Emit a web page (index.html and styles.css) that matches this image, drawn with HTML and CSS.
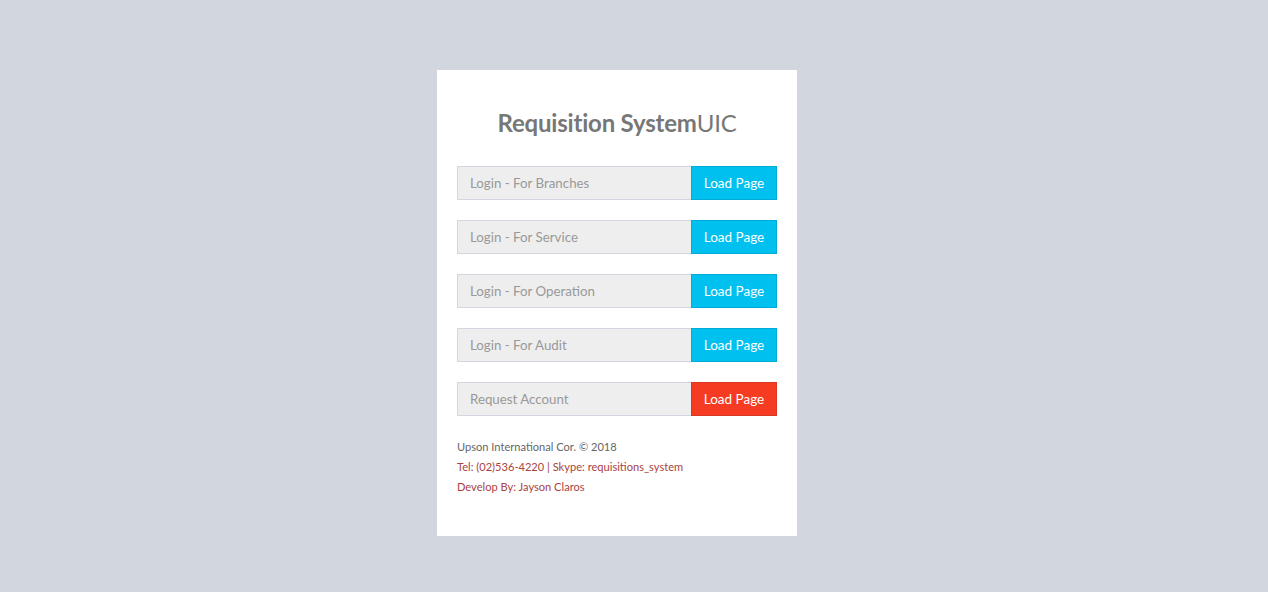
FILE: index.html
```html
<!DOCTYPE html>
<html>
<head>
<meta charset="utf-8">
<link rel="stylesheet" href="styles.css">
</head>
<body>
<div class="login-box">
  <h1 class="logo"><b>Requisition System</b>UIC</h1>
  <div class="row">
    <div class="field">Login - For Branches</div>
    <a class="btn btn-info">Load Page</a>
  </div>
  <div class="row">
    <div class="field">Login - For Service</div>
    <a class="btn btn-info">Load Page</a>
  </div>
  <div class="row">
    <div class="field">Login - For Operation</div>
    <a class="btn btn-info">Load Page</a>
  </div>
  <div class="row">
    <div class="field">Login - For Audit</div>
    <a class="btn btn-info">Load Page</a>
  </div>
  <div class="row">
    <div class="field">Request Account</div>
    <a class="btn btn-danger">Load Page</a>
  </div>
  <div class="footer">
    <div class="line muted">Upson International Cor. © 2018</div>
    <div class="line red">Tel: (02)536-4220 | Skype: requisitions_system</div>
    <div class="line red">Develop By: Jayson Claros</div>
  </div>
</div>
</body>
</html>
```
FILE: styles.css
```css
html, body {
  margin: 0;
  padding: 0;
}
body {
  background: #d2d6de;
  font-family: "Lato", "Liberation Sans", sans-serif;
  height: 592px;
  overflow: hidden;
  padding-right: 34px;
}
.login-box {
  width: 320px;
  margin: 70px auto 0;
  background: #fff;
  padding: 20px 20px 39px;
}
.logo {
  margin: 18px 0 28px;
  text-align: center;
  font-size: 24px;
  font-weight: 400;
  color: #777;
  line-height: 30px;
  letter-spacing: -0.2px;
}
.logo b {
  font-weight: 700;
}
.row {
  display: flex;
  height: 34px;
  margin-bottom: 20px;
}
.field {
  flex: 1;
  box-sizing: border-box;
  background: #eee;
  border: 1px solid #d2d6de;
  border-right: none;
  padding: 0 12px;
  display: flex;
  align-items: center;
  font-size: 13.3px;
  color: #999;
}
.btn {
  width: 86px;
  box-sizing: border-box;
  display: flex;
  align-items: center;
  justify-content: center;
  font-size: 13.5px;
  color: #fff;
  border: 1px solid;
}
.btn-info {
  background: #00c0ef;
  border-color: #00acd6;
}
.btn-danger {
  background: #f53b22;
  border-color: #d73925;
}
.footer {
  margin-top: 21px;
  font-size: 11.1px;
}
.line {
  line-height: 20px;
}
.muted {
  color: #666;
}
.red {
  color: #a94442;
}
```
